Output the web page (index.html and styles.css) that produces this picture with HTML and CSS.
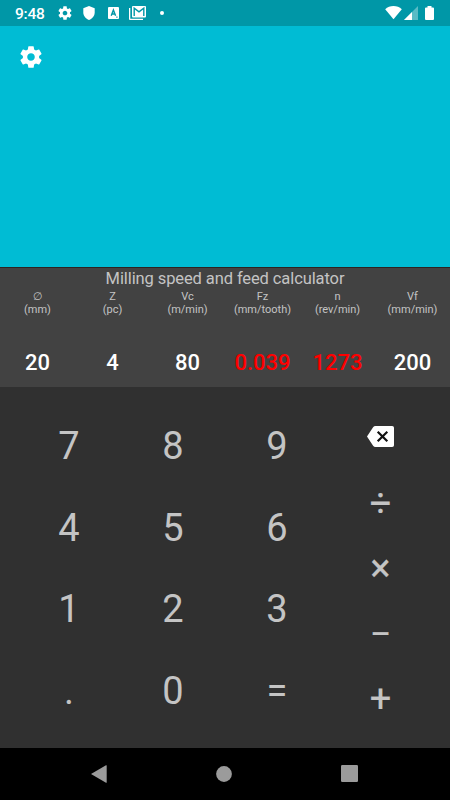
FILE: index.html
```html
<!DOCTYPE html>
<html lang="en">
<head>
  <meta charset="UTF-8">
  <title>Milling speed and feed calculator</title>
  <link rel="stylesheet" href="styles.css">
</head>
<body>

  <svg width="0" height="0" class="defs">
    <symbol id="gear" viewBox="0 0 24 24">
      <path d="M19.43 12.98c.04-.32.07-.64.07-.98s-.03-.66-.07-.98l2.11-1.65c.19-.15.24-.42.12-.64l-2-3.46c-.12-.22-.39-.3-.61-.22l-2.49 1c-.52-.4-1.08-.73-1.69-.98l-.38-2.65C14.46 2.18 14.25 2 14 2h-4c-.25 0-.46.18-.49.42l-.38 2.65c-.61.25-1.17.59-1.69.98l-2.49-1c-.23-.09-.49 0-.61.22l-2 3.46c-.13.22-.07.49.12.64l2.11 1.65c-.04.32-.07.65-.07.98s.03.66.07.98l-2.11 1.65c-.19.15-.24.42-.12.64l2 3.46c.12.22.39.3.61.22l2.49-1c.52.4 1.08.73 1.69.98l.38 2.65c.03.24.24.42.49.42h4c.25 0 .46-.18.49-.42l.38-2.65c.61-.25 1.17-.59 1.69-.98l2.49 1c.23.09.49 0 .61-.22l2-3.46c.12-.22.07-.49-.12-.64l-2.11-1.65zM12 15.5c-1.93 0-3.5-1.57-3.5-3.5s1.57-3.5 3.5-3.5 3.5 1.57 3.5 3.5-1.57 3.5-3.5 3.5z"/>
    </symbol>
  </svg>

  <div class="statusbar">
    <span class="clock">9:48</span>
    <svg class="st-gear" width="16" height="16"><use href="#gear"/></svg>
    <svg class="st-shield" width="12" height="14" viewBox="0 0 12 14"><path d="M6 0 .3 2.200v4.300C.3 9.800 2.800 12.900 6 13.900c3.200-1 5.700-4.100 5.700-7.400V2.200z"/></svg>
    <svg class="st-square" width="11" height="12" viewBox="0 0 11 12">
      <path d="M1 0h9a1 1 0 0 1 1 1v10a1 1 0 0 1-1 1H1a1 1 0 0 1-1-1V1a1 1 0 0 1 1-1z"/>
      <path class="cut" d="M3.200 8.800 5.400 2.900 7.600 8.800M3.900 7h3M8.300 10.100h1.200"/>
    </svg>
    <svg class="st-mail" width="17" height="14" viewBox="0 0 17 14">
      <path d="M0 2h1.300v10.700H14V14H1a1 1 0 0 1-1-1z"/>
      <path d="M4 0h12a1 1 0 0 1 1 1v9.500a1 1 0 0 1-1 1H4a1 1 0 0 1-1-1V1a1 1 0 0 1 1-1z"/>
      <path class="cut" d="M5.200 10V2.200L10 5.900l4.800-3.700V10"/>
    </svg>
    <span class="dot"></span>

    <svg class="st-wifi" width="17" height="14" viewBox="0 0 17 14"><path d="M8.500 13.200.2 3.200C2.400 1.200 5.300 0 8.500 0s6.100 1.200 8.300 3.200z"/></svg>
    <svg class="st-signal" width="14" height="14" viewBox="0 0 14 14"><path class="faint" d="M0 14 14 0v14z"/><path d="M0 14l8-8v8z"/></svg>
    <svg class="st-battery" width="9" height="14" viewBox="0 0 9 14"><path d="M2.500 0h4v1.500H8a1 1 0 0 1 1 1V13a1 1 0 0 1-1 1H1a1 1 0 0 1-1-1V2.500a1 1 0 0 1 1-1h1.500z"/></svg>
  </div>

  <div class="top">
    <svg width="26" height="26"><use href="#gear"/></svg>
  </div>

  <div class="panel">
    <div class="title">Milling speed and feed calculator</div>
    <div class="params">
      <div class="param">
        <div class="label"><span class="diameter">∅</span><br>(mm)</div>
        <div class="value">20</div>
      </div>
      <div class="param">
        <div class="label">Z<br>(pc)</div>
        <div class="value">4</div>
      </div>
      <div class="param">
        <div class="label">Vc<br>(m/min)</div>
        <div class="value">80</div>
      </div>
      <div class="param">
        <div class="label">Fz<br>(mm/tooth)</div>
        <div class="value red">0.039</div>
      </div>
      <div class="param">
        <div class="label">n<br>(rev/min)</div>
        <div class="value red">1273</div>
      </div>
      <div class="param">
        <div class="label">Vf<br>(mm/min)</div>
        <div class="value">200</div>
      </div>
    </div>
  </div>

  <div class="keypad">
    <div class="digits">
      <div>7</div><div>8</div><div>9</div>
      <div>4</div><div>5</div><div>6</div>
      <div>1</div><div>2</div><div>3</div>
      <div>.</div><div>0</div><div>=</div>
    </div>
    <div class="ops">
      <div class="backspace">
        <svg width="27" height="21" viewBox="0 0 27 21">
          <path class="key" d="M8.500 0H25.200a1.800 1.800 0 0 1 1.800 1.800v17.400a1.800 1.800 0 0 1-1.800 1.800H8.500a3 3 0 0 1-2.400-1.200L0 10.500l6.100-9.300A3 3 0 0 1 8.500 0z"/>
          <path class="cross" d="M10.700 5.700l9.600 9.600M20.300 5.700l-9.600 9.600"/>
        </svg>
      </div>
      <div>÷</div>
      <div>×</div>
      <div>−</div>
      <div>+</div>
    </div>
  </div>

  <div class="navbar">
    <svg width="16" height="18" viewBox="0 0 16 18"><path d="M0 9 15 .3q.7-.3.700.5v16.400q0 .8-.7.500z"/></svg>
    <svg width="16" height="16" viewBox="0 0 16 16"><circle cx="8" cy="8" r="7.900"/></svg>
    <svg width="17" height="17" viewBox="0 0 17 17"><rect width="17" height="17" rx="1.200"/></svg>
  </div>

</body>
</html>
```

FILE: styles.css
```css
body {
  margin: 0;
  width: 450px;
  height: 800px;
  display: flex;
  flex-direction: column;
  overflow: hidden;
  background-color: #303030;
  font-family: Roboto, sans-serif;
}

svg {
  display: block;
  flex: none;
}

.defs {
  position: absolute;
}

.statusbar {
  height: 26px;
  flex: none;
  display: flex;
  align-items: center;
  background-color: #0097a7;
  fill: #fff;
}

.clock {
  width: 42px;
  padding-left: 15px;
  padding-top: 2px;
  font-size: 15.500px;
  letter-spacing: -0.2px;
  font-weight: 500;
  color: #fff;
}

.st-shield {
  margin-left: 10px;
}

.st-square {
  margin-left: 13px;
}

.st-mail {
  margin-left: 10px;
}

.cut {
  fill: none;
  stroke: #0097a7;
  stroke-width: 1.400;
}

.dot {
  width: 4px;
  height: 4px;
  margin-left: 14px;
  border-radius: 50%;
  background-color: #fff;
}

.st-wifi {
  margin-left: auto;
}

.st-signal {
  margin-left: 2px;
}

.faint {
  opacity: 0.35;
}

.st-battery {
  margin-left: 7px;
  margin-right: 16px;
}

.top {
  height: 223px;
  padding: 18px 18px 0;
  flex: none;
  background-color: #00bcd4;
  fill: #fff;
}

.panel {
  height: 119px;
  flex: none;
  border-top: 1px solid #2c2422;
  background-color: #424242;
  color: #c4c4c4;
  text-align: center;
}

.title {
  height: 23px;
  line-height: 22px;
  font-size: 16.500px;
  letter-spacing: -0.1px;
}

.params {
  display: grid;
  grid-template-columns: repeat(6, 75px);
}

.label {
  height: 55px;
  font-size: 11px;
  line-height: 12.500px;
}

.diameter {
  font-family: "DejaVu Sans", sans-serif;
  line-height: 1;
}

.value {
  line-height: 34px;
  font-size: 22px;
  font-weight: 500;
  color: #fff;
}

.value.red {
  color: #f00;
}

.keypad {
  flex: 1;
  display: grid;
  grid-template-columns: 312px 103px;
  padding: 18px 17px 16px;
  font-size: 38px;
  color: #c4c4c4;
}

.digits {
  display: grid;
  grid-template-columns: repeat(3, 1fr);
  grid-template-rows: repeat(4, 1fr);
}

.ops {
  display: grid;
  grid-template-rows: repeat(5, 1fr);
  -webkit-text-stroke: 0.2px #c4c4c4;
}

.digits div,
.ops div {
  display: flex;
  align-items: center;
  justify-content: center;
}

.ops .backspace {
  padding-bottom: 2px;
}

.key {
  fill: #fff;
}

.cross {
  fill: none;
  stroke: #111;
  stroke-width: 2.200;
}

.navbar {
  height: 52px;
  flex: none;
  display: flex;
  align-items: center;
  justify-content: space-between;
  padding: 0 92px 1px 91px;
  box-sizing: border-box;
  background-color: #000;
  fill: #9b9b9b;
}
```
